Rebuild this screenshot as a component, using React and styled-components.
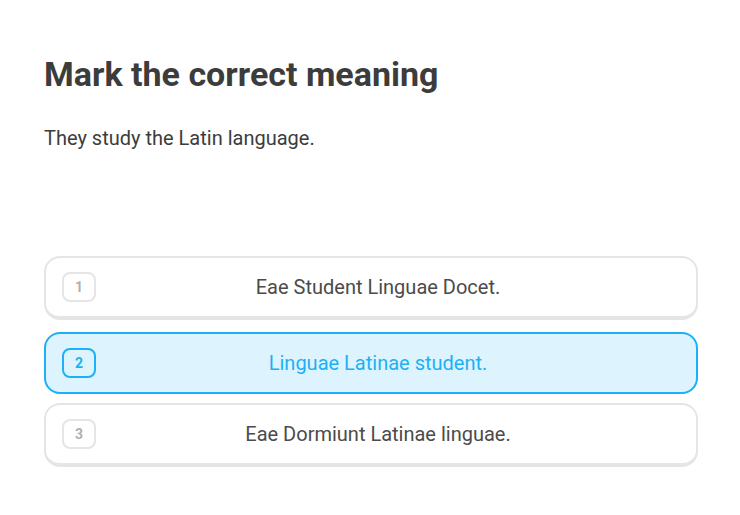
import React, { useState } from 'react';
import styled, { createGlobalStyle } from 'styled-components';

const GlobalStyle = createGlobalStyle`
  html, body {
    margin: 0;
    padding: 0;
    background: #ffffff;
  }
  body {
    font-family: Roboto, "Noto Sans", "Liberation Sans", sans-serif;
    color: #3c3c3c;
  }
`;

const Page = styled.div`
  width: 654px;
  padding: 52px 42px 0 44px;
`;

const Title = styled.h1`
  margin: 0;
  font-size: 34px;
  line-height: 44px;
  font-weight: 700;
  color: #3c3c3c;
`;

const Prompt = styled.p`
  margin: 29px 0 0;
  font-size: 20px;
  line-height: 26px;
  color: #3c3c3c;
`;

const Choices = styled.div`
  display: flex;
  flex-direction: column;
  gap: 9px;
  margin-top: 105px;
`;

const Choice = styled.button`
  display: flex;
  align-items: center;
  box-sizing: border-box;
  width: 100%;
  height: ${(p) => (p.$selected ? '62px' : '64px')};
  margin-top: ${(p) => (p.$selected ? '3px' : '0')};
  padding: 0 16px;
  border: 2px solid ${(p) => (p.$selected ? '#1cb0f6' : '#e5e5e5')};
  border-bottom-width: ${(p) => (p.$selected ? '2px' : '4px')};
  border-radius: 16px;
  background: ${(p) => (p.$selected ? '#ddf4ff' : '#ffffff')};
  font-family: inherit;
  cursor: pointer;
`;

const Key = styled.span`
  display: flex;
  align-items: center;
  justify-content: center;
  box-sizing: border-box;
  width: 34px;
  height: 30px;
  border: 2px solid ${(p) => (p.$selected ? '#1cb0f6' : '#e5e5e5')};
  border-radius: 8px;
  font-size: 14px;
  font-weight: 700;
  color: ${(p) => (p.$selected ? '#1cb0f6' : '#afafaf')};
`;

const Label = styled.span`
  flex: 1;
  margin-right: 20px;
  text-align: center;
  font-size: 20px;
  color: ${(p) => (p.$selected ? '#1cb0f6' : '#4b4b4b')};
`;

const options = [
  'Eae Student Linguae Docet.',
  'Linguae Latinae student.',
  'Eae Dormiunt Latinae linguae.',
];

export default function App() {
  const [selected, setSelected] = useState(1);

  return (
    <>
      <GlobalStyle />
      <Page>
        <Title>Mark the correct meaning</Title>
        <Prompt>They study the Latin language.</Prompt>
        <Choices>
          {options.map((text, i) => (
            <Choice
              key={text}
              $selected={selected === i}
              onClick={() => setSelected(i)}
            >
              <Key $selected={selected === i}>{i + 1}</Key>
              <Label $selected={selected === i}>{text}</Label>
            </Choice>
          ))}
        </Choices>
      </Page>
    </>
  );
}
